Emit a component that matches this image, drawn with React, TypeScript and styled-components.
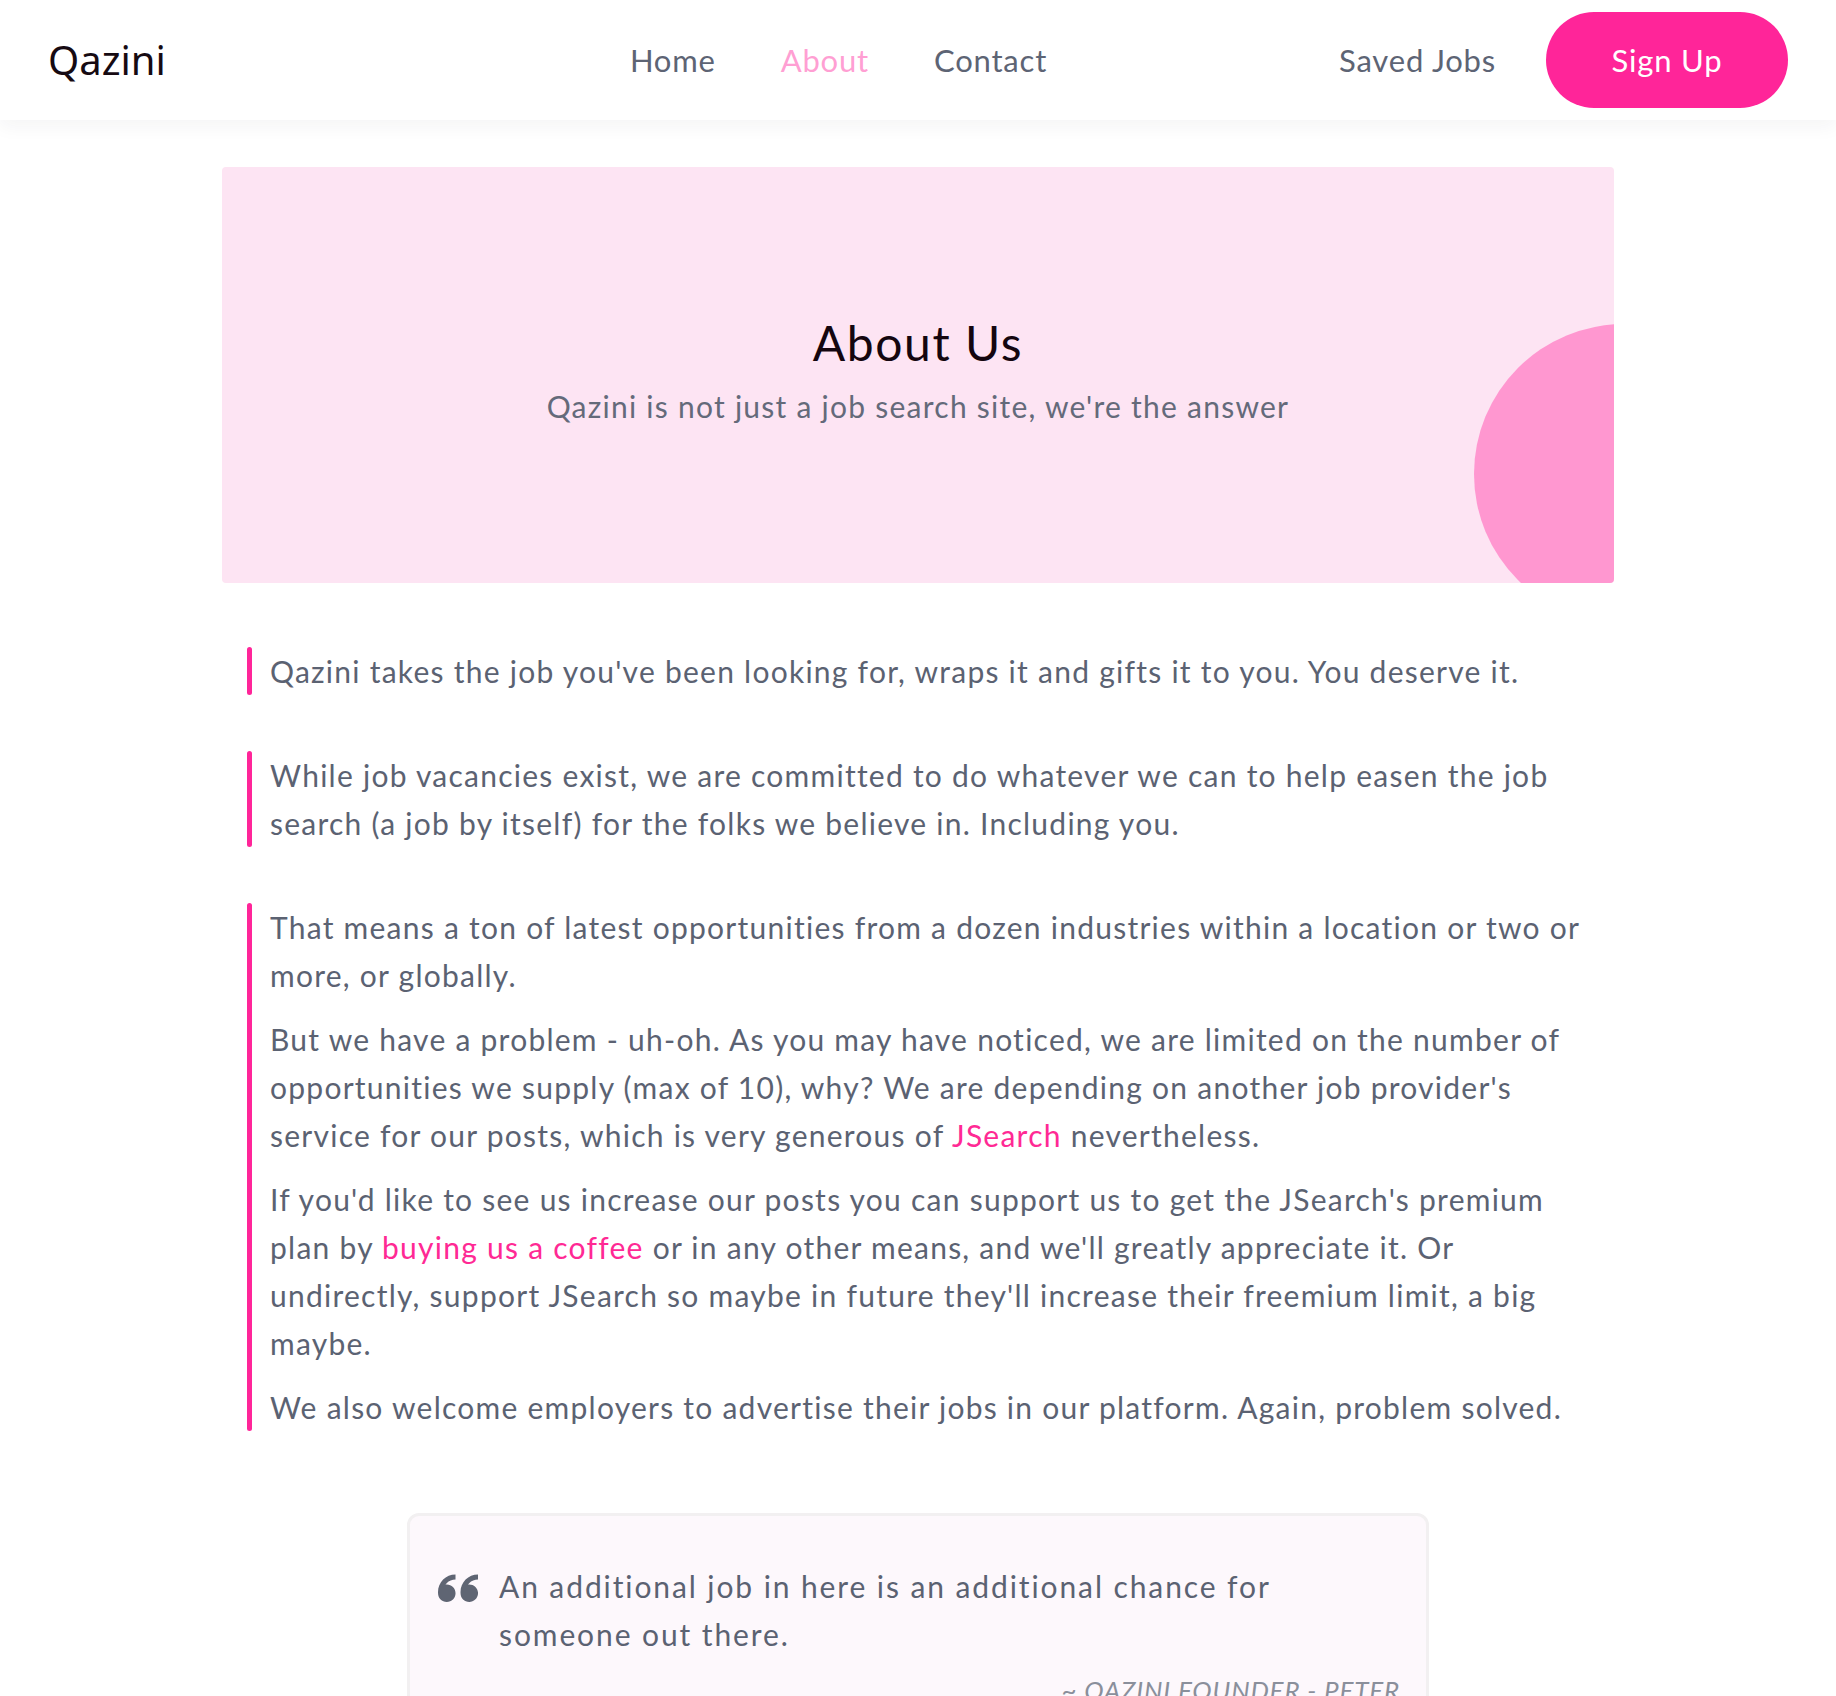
import React from "react";
import styled, { createGlobalStyle } from "styled-components";
import { ImQuotesLeft } from "react-icons/im";

const GlobalStyle = createGlobalStyle`
  html, body { margin: 0; padding: 0; background: #ffffff; }
  body { font-family: Lato, "Noto Sans", sans-serif; -webkit-font-smoothing: antialiased; }
  * { box-sizing: border-box; }
`;

const Header = styled.header`
  height: 120px;
  padding: 0 48px;
  display: flex;
  align-items: center;
  background: #ffffff;
  box-shadow: 0 6px 18px rgba(30, 40, 60, 0.05);
`;

const Logo = styled.div`
  font-family: "Noto Sans", sans-serif;
  font-size: 40px;
  color: #160a12;
  line-height: 1;
`;

const Nav = styled.nav`
  margin-left: auto;
  display: flex;
  gap: 65px;
`;

const NavLink = styled.a<{ $active?: boolean }>`
  font-size: 31px;
  letter-spacing: 0.8px;
  color: ${(p) => (p.$active ? "#ff9fd3" : "#5d6474")};
  text-decoration: none;
`;

const RightGroup = styled.div`
  margin-left: 292px;
  display: flex;
  align-items: center;
  gap: 50px;
`;

const SignUp = styled.button`
  width: 242px;
  height: 96px;
  border: none;
  border-radius: 48px;
  background: #ff2599;
  color: #ffffff;
  font-family: Lato, sans-serif;
  font-size: 31px;
  letter-spacing: 0.8px;
`;

const Main = styled.main`
  width: 1392px;
  margin: 47px auto 0;
`;

const Hero = styled.section`
  position: relative;
  height: 416px;
  padding-bottom: 6px;
  background: #fde4f3;
  border-radius: 4px;
  overflow: hidden;
  display: flex;
  flex-direction: column;
  align-items: center;
  justify-content: center;
`;

const Circle = styled.div`
  position: absolute;
  left: 1252px;
  top: 157px;
  width: 300px;
  height: 300px;
  border-radius: 50%;
  background: #ff97d0;
`;

const Title = styled.h1`
  margin: 0 0 2px;
  font-weight: 400;
  font-size: 48px;
  line-height: 58px;
  color: #14060f;
  letter-spacing: 1.6px;
`;

const Subtitle = styled.p`
  margin: 8px 0 0;
  font-size: 30px;
  line-height: 48px;
  letter-spacing: 1.25px;
  color: #646a7a;
`;

const Content = styled.div`
  padding: 64px 8px 0 25px;
  display: flex;
  flex-direction: column;
  gap: 56px;
`;

const Block = styled.div`
  display: flex;
`;

const Bar = styled.div`
  flex: 0 0 5px;
  border-radius: 3px;
  background: #ff2599;
`;

const BlockText = styled.div`
  margin-left: 18px;
  flex: 1;
  display: flex;
  flex-direction: column;
  gap: 16px;
`;

const Para = styled.p`
  margin: 0;
  font-size: 30px;
  line-height: 48px;
  letter-spacing: 1.25px;
  color: #5b6272;
`;

const Link = styled.a`
  color: #ff2994;
  text-decoration: none;
`;

const QuoteCard = styled.figure`
  width: 1022px;
  margin: 82px auto 0;
  padding: 46px 26px 40px 28px;
  background: #fdf8fc;
  border: 3px solid #f2f0f1;
  border-radius: 12px;
`;

const QuoteRow = styled.blockquote`
  margin: 0;
  display: flex;
  align-items: flex-start;
  gap: 21px;
`;

const QuoteIcon = styled.span`
  flex: 0 0 40px;
  color: #5f6573;
  display: flex;
  margin-top: 5px;
  svg { width: 40px; height: 40px; }
`;

const QuoteText = styled.p`
  margin: 0;
  max-width: 830px;
  font-size: 30px;
  line-height: 48px;
  letter-spacing: 1.9px;
  color: #5b6272;
`;

const Signature = styled.figcaption`
  margin-top: 16px;
  text-align: right;
  font-style: italic;
  text-transform: uppercase;
  font-size: 26px;
  letter-spacing: 0.8px;
  color: #8a8f9b;
`;

export default function App() {
  return (
    <>
      <GlobalStyle />
      <Header>
        <Logo>Qazini</Logo>
        <Nav>
          <NavLink href="#">Home</NavLink>
          <NavLink href="#" $active>About</NavLink>
          <NavLink href="#">Contact</NavLink>
        </Nav>
        <RightGroup>
          <NavLink href="#">Saved Jobs</NavLink>
          <SignUp>Sign Up</SignUp>
        </RightGroup>
      </Header>
      <Main>
        <Hero>
          <Circle />
          <Title>About Us</Title>
          <Subtitle>Qazini is not just a job search site, we're the answer</Subtitle>
        </Hero>
        <Content>
          <Block>
            <Bar />
            <BlockText>
              <Para>Qazini takes the job you've been looking for, wraps it and gifts it to you. You deserve it.</Para>
            </BlockText>
          </Block>
          <Block>
            <Bar />
            <BlockText>
              <Para>While job vacancies exist, we are committed to do whatever we can to help easen the job search (a job by itself) for the folks we believe in. Including you.</Para>
            </BlockText>
          </Block>
          <Block>
            <Bar />
            <BlockText>
              <Para>That means a ton of latest opportunities from a dozen industries within a location or two or more, or globally.</Para>
              <Para>
                But we have a problem - uh-oh. As you may have noticed, we are limited on the number of opportunities we supply (max of 10), why? We are depending on another job provider's service for our posts, which is very generous of <Link href="#">JSearch</Link> nevertheless.
              </Para>
              <Para>
                If you'd like to see us increase our posts you can support us to get the JSearch's premium plan by <Link href="#">buying us a coffee</Link> or in any other means, and we'll greatly appreciate it. Or undirectly, support JSearch so maybe in future they'll increase their freemium limit, a big maybe.
              </Para>
              <Para>We also welcome employers to advertise their jobs in our platform. Again, problem solved.</Para>
            </BlockText>
          </Block>
        </Content>
        <QuoteCard>
          <QuoteRow>
            <QuoteIcon>
              <ImQuotesLeft />
            </QuoteIcon>
            <QuoteText>An additional job in here is an additional chance for someone out there.</QuoteText>
          </QuoteRow>
          <Signature>~ Qazini Founder - Peter</Signature>
        </QuoteCard>
      </Main>
    </>
  );
}
